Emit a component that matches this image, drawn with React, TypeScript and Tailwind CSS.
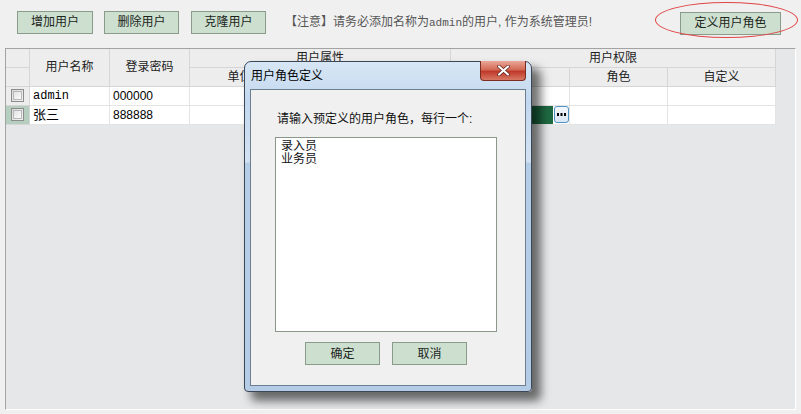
import React from 'react';

const COLS = 'grid-cols-[24px_80px_80px_124px_137px_119px_98px_108px]';
const FONT = "font-['Liberation_Sans','Noto_Sans_CJK_SC',sans-serif]";

const ToolButton = ({ label, className = '' }: { label: string; className?: string }) => (
    <button
        className={`h-[23px] border border-[#8a9b8b] bg-[#cddfcf] text-[12px] leading-none text-[#1c261c] ${className}`}
    >
        {label}
    </button>
);

const CheckBox = () => (
    <span className="block h-[13px] w-[13px] border border-[#8c8c8c] bg-[linear-gradient(135deg,#d8d8d8,#f4f4f4)] p-[1px]">
        <span className="block h-full w-full border border-[#b8b8b8] bg-[linear-gradient(135deg,#e2e2e2,#fbfbfb)]" />
    </span>
);

const HeadCell = ({ children, className = '' }: { children?: React.ReactNode; className?: string }) => (
    <div
        className={`flex items-center justify-center border-r border-b border-[#d6d6d6] bg-[#ededed] text-[12px] leading-none text-[#222] ${className}`}
    >
        {children}
    </div>
);

const Cell = ({ children, className = '' }: { children?: React.ReactNode; className?: string }) => (
    <div className={`flex items-center border-r border-b border-[#e4e4e4] bg-white text-[12px] leading-none ${className}`}>
        {children}
    </div>
);

const rows = [
    { name: 'admin', pwd: '000000', mono: true, current: false },
    { name: '张三', pwd: '888888', mono: false, current: true },
];

export default function App() {
    return (
        <div className={`relative h-[414px] w-[801px] overflow-hidden bg-[#f0f0f0] ${FONT}`}>
            {/* toolbar */}
            <div className="flex items-center pt-[10px] pl-[17px]">
                <ToolButton label="增加用户" className="w-[76px]" />
                <ToolButton label="删除用户" className="ml-[11px] w-[75px]" />
                <ToolButton label="克隆用户" className="ml-[12px] w-[75px]" />
                <span className="ml-[19px] text-[12px] leading-none text-[#555]">
                    【注意】请务必添加名称为<span className="font-['Liberation_Mono',monospace] text-[11px]">admin</span>
                    的用户, 作为系统管理员!
                </span>
                <div className="relative ml-auto mr-[20px]">
                    <ToolButton label="定义用户角色" className="w-[101px]" />
                    <span className="pointer-events-none absolute top-[-8px] left-[-25px] h-[36px] w-[143px] rounded-[50%] border border-[#e04545]" />
                </div>
            </div>

            {/* grid */}
            <div className="mt-[13px] ml-[5px] h-[362px] w-[791px] border-t border-l border-[#a3a3a3] border-r border-b border-r-white border-b-white bg-[#e6e7e8]">
                <div className={`grid ${COLS} grid-rows-[19px_19px]`}>
                    <HeadCell className="col-start-1 row-start-1" />
                    <HeadCell className="col-start-1 row-start-2" />
                    <HeadCell className="col-start-2 row-span-2 row-start-1">用户名称</HeadCell>
                    <HeadCell className="col-start-3 row-span-2 row-start-1">登录密码</HeadCell>
                    <HeadCell className="col-span-2 col-start-4 row-start-1">用户属性</HeadCell>
                    <HeadCell className="col-span-3 col-start-6 row-start-1 bg-[#b5cec0]">用户权限</HeadCell>
                    <HeadCell className="col-start-4 row-start-2">单位名称</HeadCell>
                    <HeadCell className="col-start-5 row-start-2">所属部门</HeadCell>
                    <HeadCell className="col-start-6 row-start-2 bg-[#b5cec0]">权限</HeadCell>
                    <HeadCell className="col-start-7 row-start-2">角色</HeadCell>
                    <HeadCell className="col-start-8 row-start-2">自定义</HeadCell>
                </div>
                {rows.map((r) => (
                    <div key={r.name} className={`grid ${COLS} h-[19px]`}>
                        <div
                            className={`flex items-center justify-center border-r border-b border-[#d6d6d6] ${
                                r.current ? 'bg-[#b5cec0]' : 'bg-[#ededed]'
                            }`}
                        >
                            <CheckBox />
                        </div>
                        <Cell
                            className={`pl-[3px] ${
                                r.mono ? "font-['Liberation_Mono',monospace] text-[11px]" : 'text-[13px]'
                            }`}
                        >
                            {r.name}
                        </Cell>
                        <Cell className="pl-[3px] text-[11px]">{r.pwd}</Cell>
                        <Cell />
                        <Cell />
                        {r.current ? (
                            <div className="flex items-center border-r border-b border-[#e4e4e4] bg-white">
                                <div className="h-full w-[102px] bg-[#1e6a43]" />
                                <span className="ml-[1px] flex h-[17px] w-[15px] items-center justify-center rounded-[3px] border border-[#4f94c4] bg-[linear-gradient(#f4f8fc,#d9e6f2)]">
                                    <svg width="9" height="3" viewBox="0 0 9 3">
                                        <rect x="0" y="0" width="2" height="3" fill="#000" />
                                        <rect x="3.5" y="0" width="2" height="3" fill="#000" />
                                        <rect x="7" y="0" width="2" height="3" fill="#000" />
                                    </svg>
                                </span>
                            </div>
                        ) : (
                            <Cell />
                        )}
                        <Cell />
                        <Cell />
                    </div>
                ))}
            </div>

            {/* dialog window */}
            <div className="absolute top-[61px] left-[244px] flex h-[331px] w-[288px] flex-col rounded-t-[7px] rounded-b-[4px] border border-[#3b4756] bg-[linear-gradient(#d7e6f5,#c3d8ee_40px,#d2e2f2_100px,#b6cde7_101px,#b4cce6)] shadow-[8px_8px_10px_1px_rgba(0,0,0,0.55)]">
                <div className="relative flex h-[27px] shrink-0 items-center pl-[6px] text-[12px] leading-none text-black">
                    用户角色定义
                    <span className="absolute top-[-1px] right-[5px] flex h-[20px] w-[46px] items-center justify-center rounded-b-[4px] border border-t-0 border-[#7b2d22] bg-[linear-gradient(#eaa799,#d36a55_45%,#c0392a_55%,#d77864)]">
                        <svg width="13" height="11" viewBox="0 0 13 11">
                            <path d="M2 1.5 L11 9.5 M11 1.5 L2 9.5" stroke="#5a2018" strokeWidth="3.6" strokeLinecap="round" />
                            <path d="M2 1.5 L11 9.5 M11 1.5 L2 9.5" stroke="#ffffff" strokeWidth="2.2" strokeLinecap="round" />
                        </svg>
                    </span>
                </div>
                <div className="mx-[5px] mb-[5px] flex-1 border border-[#6d7e91] bg-[#f0f0f0]">
                    <div className="pt-[23px] pl-[26px] text-[12px] leading-[12px] text-[#111]">
                        请输入预定义的用户角色，每行一个:
                    </div>
                    <div className="mt-[12px] ml-[24px] h-[195px] w-[222px] border border-[#8a988c] bg-white px-[5px] pt-[2px] text-[12px] leading-[13px] text-[#111]">
                        <div>录入员</div>
                        <div>业务员</div>
                    </div>
                    <div className="mt-[10px] flex pl-[54px]">
                        <ToolButton label="确定" className="w-[75px]" />
                        <ToolButton label="取消" className="ml-[12px] w-[75px]" />
                    </div>
                </div>
            </div>
        </div>
    );
}
